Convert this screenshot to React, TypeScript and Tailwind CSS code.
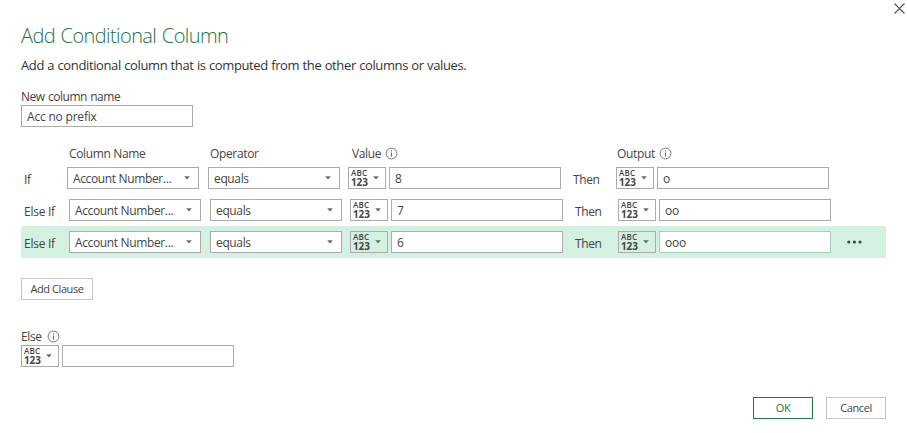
import React from "react";

function Caret() {
  return (
    <svg className="shrink-0" width="6" height="4" viewBox="0 0 6 4">
      <path d="M0.2 0.2h5.6L3 3.4z" fill="#6b6b6b" />
    </svg>
  );
}

function Info() {
  return (
    <svg className="shrink-0" width="13" height="13" viewBox="0 0 13 13" fill="none" stroke="#666">
      <circle cx="6.5" cy="6.5" r="5.4" strokeWidth="0.9" />
      <path d="M6.5 5.5v4M6.5 3.3v1.2" strokeWidth="1" />
    </svg>
  );
}

function Select({ label }: { label: string }) {
  return (
    <div className="flex h-[22px] w-[132px] shrink-0 items-center justify-between border border-[#ababab] bg-white pr-[8px] pl-[5px]">
      <span className="pt-[2px] leading-[18px] tracking-[-0.36px] whitespace-nowrap">{label}</span>
      <Caret />
    </div>
  );
}

function TypePicker() {
  return (
    <div className="flex h-[22px] w-[38px] shrink-0 items-center justify-between border border-[#ababab] pr-[6px] pl-[2px] text-[#444]">
      <div className="flex flex-col pb-[2px]">
        <span className="h-[8px] text-[8px] leading-[8px] font-semibold tracking-[0.2px]">ABC</span>
        <span className="h-[9px] text-[10px] leading-[10px] font-bold tracking-[-0.1px]">123</span>
      </div>
      <Caret />
    </div>
  );
}

function Field({ value, active }: { value?: string; active?: boolean }) {
  return (
    <div
      className={`flex h-[22px] w-[172px] shrink-0 items-center border bg-white pl-[5px] ${active ? "border-[#9fd5b7]" : "border-[#ababab]"}`}
    >
      <span className="pt-[2px] leading-[18px] tracking-[-0.2px] whitespace-nowrap">{value}</span>
    </div>
  );
}

type Clause = { word: string; value: string; output: string; active?: boolean };

const clauses: Clause[] = [
  { word: "If", value: "8", output: "o" },
  { word: "Else If", value: "7", output: "oo" },
  { word: "Else If", value: "6", output: "ooo", active: true },
];

function ClauseRow({ clause, first }: { clause: Clause; first: boolean }) {
  return (
    <div className={`flex h-8 w-[865px] items-center pl-[3px] ${clause.active ? "bg-[#d3f0e0]" : ""}`}>
      <span className={`shrink-0 pt-[4px] tracking-[-0.25px] ${first ? "w-[43px]" : "w-[45px]"}`}>{clause.word}</span>
      <Select label="Account Number..." />
      <div className="w-[9px] shrink-0" />
      <Select label="equals" />
      <div className="w-2 shrink-0" />
      <TypePicker />
      <div className="w-[3px] shrink-0" />
      <Field value={clause.value} />
      <span className="w-[55px] shrink-0 pt-[4px] pl-[12px] tracking-[-0.4px]">Then</span>
      <TypePicker />
      <div className="w-[3px] shrink-0" />
      <Field value={clause.output} active={clause.active} />
      {clause.active && (
        <svg className="ml-4" width="16" height="4" viewBox="0 0 16 4" fill="#444">
          <circle cx="1.8" cy="2" r="1.6" />
          <circle cx="7.4" cy="2" r="1.6" />
          <circle cx="13" cy="2" r="1.6" />
        </svg>
      )}
    </div>
  );
}

export default function App() {
  return (
    <main className="relative h-[433px] w-[907px] overflow-hidden bg-white pl-[21px] font-['Open_Sans','Noto_Sans',sans-serif] text-[12px] leading-4 text-[#444]">
      <svg className="absolute top-[3px] left-[894px]" width="11" height="11" viewBox="0 0 11 11" stroke="#555" strokeWidth="1.1">
        <path d="M0.5 0.5l10 10M10.5 0.5l-10 10" />
      </svg>
      <h1 className="flex h-[54px] items-end text-[20px] leading-9 font-light tracking-[-0.6px] whitespace-nowrap text-[#217346] [word-spacing:1px]">
        Add Conditional Column
      </h1>
      <p className="mt-[1px] h-[21px] text-[13px] leading-5 tracking-[-0.37px] whitespace-nowrap text-[#333] [word-spacing:0.3px]">
        Add a conditional column that is computed from the other columns or values.
      </p>
      <div className="mt-3 h-[17px] leading-[17px] tracking-[-0.45px] [word-spacing:0.5px]">New column name</div>
      <Field value="Acc no prefix" />

      <div className="mt-[18px] flex h-[17px] items-center pl-12 tracking-[-0.35px]">
        <span className="w-[141px]">Column Name</span>
        <span className="w-[142px]">Operator</span>
        <span className="flex w-[265px] items-center gap-[4px]">
          Value <Info />
        </span>
        <span className="flex items-center gap-[4px]">
          Output <Info />
        </span>
      </div>
      <div>
        {clauses.map((c, i) => (
          <ClauseRow key={i} clause={c} first={i === 0} />
        ))}
      </div>

      <button className="mt-5 flex h-[22px] w-[72px] items-center justify-center border border-[#c6c6c6] text-[11px] tracking-[-0.43px] whitespace-nowrap">
        Add Clause
      </button>
      <div className="mt-7 flex h-[17px] items-center gap-[5px] tracking-[-0.4px]">
        Else <Info />
      </div>
      <div className="flex gap-[3px]">
        <TypePicker />
        <Field />
      </div>
      <div className="mt-[30px] flex justify-end gap-[13px] pr-[21px]">
        <button className="flex h-[22px] w-[60px] items-center justify-center border border-[#217346] text-[11px] tracking-[-0.3px] text-[#217346]">
          OK
        </button>
        <button className="flex h-[22px] w-[60px] items-center justify-center border border-[#c6c6c6] text-[11px] tracking-[-0.4px]">
          Cancel
        </button>
      </div>
    </main>
  );
}
